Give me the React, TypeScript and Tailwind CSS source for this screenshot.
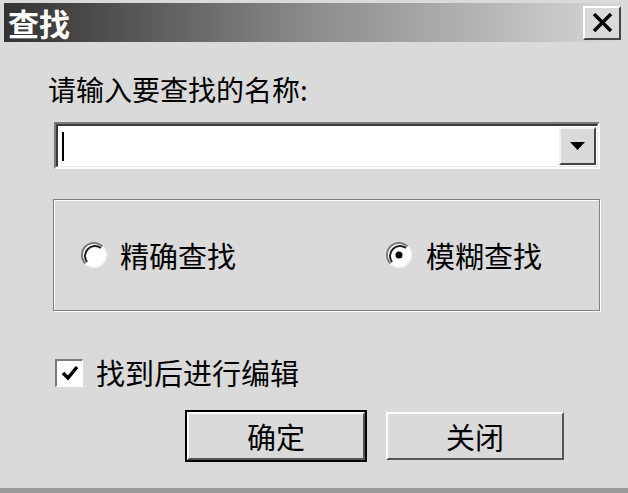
import React from 'react';

const font = { fontFamily: '"Noto Sans CJK SC", "Noto Sans", sans-serif' };

function Radio({ checked }: { checked?: boolean }) {
  return (
    <svg width="28" height="28" viewBox="0 0 28 28">
      <circle cx="14" cy="14" r="12" fill="#ffffff" />
      <path d="M5.5 22.5 A12 12 0 0 1 22.5 5.5" fill="none" stroke="#7a7a7a" strokeWidth="2" />
      <path d="M7 21 A10 10 0 0 1 21 7" fill="none" stroke="#202020" strokeWidth="2" />
      <path d="M22.5 5.5 A12 12 0 0 1 5.5 22.5" fill="none" stroke="#f4f4f4" strokeWidth="2" />
      {checked && <circle cx="14" cy="14" r="3.5" fill="#000000" />}
    </svg>
  );
}

function RaisedButton({ children, isDefault }: { children: React.ReactNode; isDefault?: boolean }) {
  return (
    <div className={isDefault ? 'border-2 border-black' : 'p-[2px]'}>
      <div className="w-[178px] h-[48px] bg-[#dadada] border-t-2 border-l-2 border-white border-b-2 border-r-2 border-b-[#555555] border-r-[#555555] flex items-center justify-center text-[29px] text-black leading-none">
        {children}
      </div>
    </div>
  );
}

export default function App() {
  return (
    <div className="w-[628px] h-[493px] bg-[#dadada] flex flex-col border-b-[5px] border-[#9a9a9a] overflow-hidden" style={font}>
      {/* Title bar */}
      <div className="mt-[3px] ml-[4px] mr-[6px] h-[39px] flex items-center justify-between bg-gradient-to-r from-[#333333] via-[#8c8c8c] to-[#d8d8d8]">
        <span className="pl-[4px] text-white font-bold text-[31px] leading-none">查找</span>
        <div className="mr-[1px] w-[38px] h-[34px] bg-[#dadada] border-t-2 border-l-2 border-white border-b-2 border-r-2 border-b-[#444444] border-r-[#444444] flex items-center justify-center">
          <svg width="21" height="19" viewBox="0 0 21 19">
            <path d="M2 1 L19 18 M19 1 L2 18" stroke="#000" strokeWidth="3.5" />
          </svg>
        </div>
      </div>

      {/* Body */}
      <div className="flex flex-col pl-[48px] pr-[28px]">
        <div className="mt-[33px] text-[28px] leading-[28px] text-black">请输入要查找的名称:</div>

        {/* Combo box */}
        <div className="mt-[19px] ml-[6px] h-[47px] border-t-2 border-l-2 border-[#7a7a7a] border-b-2 border-r-2 border-b-white border-r-white">
          <div className="h-full border-t-2 border-l-2 border-[#3a3a3a] border-b border-r border-b-[#e8e8e8] border-r-[#e8e8e8] bg-white flex items-stretch">
            <div className="flex-1 flex items-center pl-[4px]">
              <div className="w-[2px] h-[29px] bg-black" />
            </div>
            <div className="w-[37px] my-[1px] mr-[1px] bg-[#dadada] border-t-2 border-l-2 border-[#f2f2f2] border-b-2 border-r-2 border-b-[#444444] border-r-[#444444] flex items-center justify-center">
              <svg width="15" height="8" viewBox="0 0 15 8">
                <path d="M0 0 L15 0 L7.5 8 Z" fill="#000" />
              </svg>
            </div>
          </div>
        </div>

        {/* Group box */}
        <div className="mt-[30px] ml-[5px] h-[112px] border border-[#808080] shadow-[inset_1px_1px_0_#ffffff,1px_1px_0_#ffffff] flex items-center">
          <div className="flex items-center ml-[26px]">
            <Radio />
            <span className="ml-[12px] text-[29px] leading-none text-black">精确查找</span>
          </div>
          <div className="flex items-center ml-[149px]">
            <Radio checked />
            <span className="ml-[13px] text-[29px] leading-none text-black">模糊查找</span>
          </div>
        </div>

        {/* Checkbox */}
        <div className="mt-[47px] ml-[7px] flex items-center">
          <div className="w-[28px] h-[28px] border-t-2 border-l-2 border-[#7a7a7a] border-b border-r border-b-white border-r-white bg-white flex items-center justify-center">
            <svg width="18" height="16" viewBox="0 0 18 16">
              <path d="M2 8 L7 13 L16 2" fill="none" stroke="#000" strokeWidth="3.5" />
            </svg>
          </div>
          <span className="ml-[13px] text-[29px] leading-none text-black">找到后进行编辑</span>
        </div>

        {/* Buttons */}
        <div className="mt-[23px] ml-[137px] flex gap-[17px]">
          <RaisedButton isDefault>确定</RaisedButton>
          <RaisedButton>关闭</RaisedButton>
        </div>
      </div>
    </div>
  );
}
